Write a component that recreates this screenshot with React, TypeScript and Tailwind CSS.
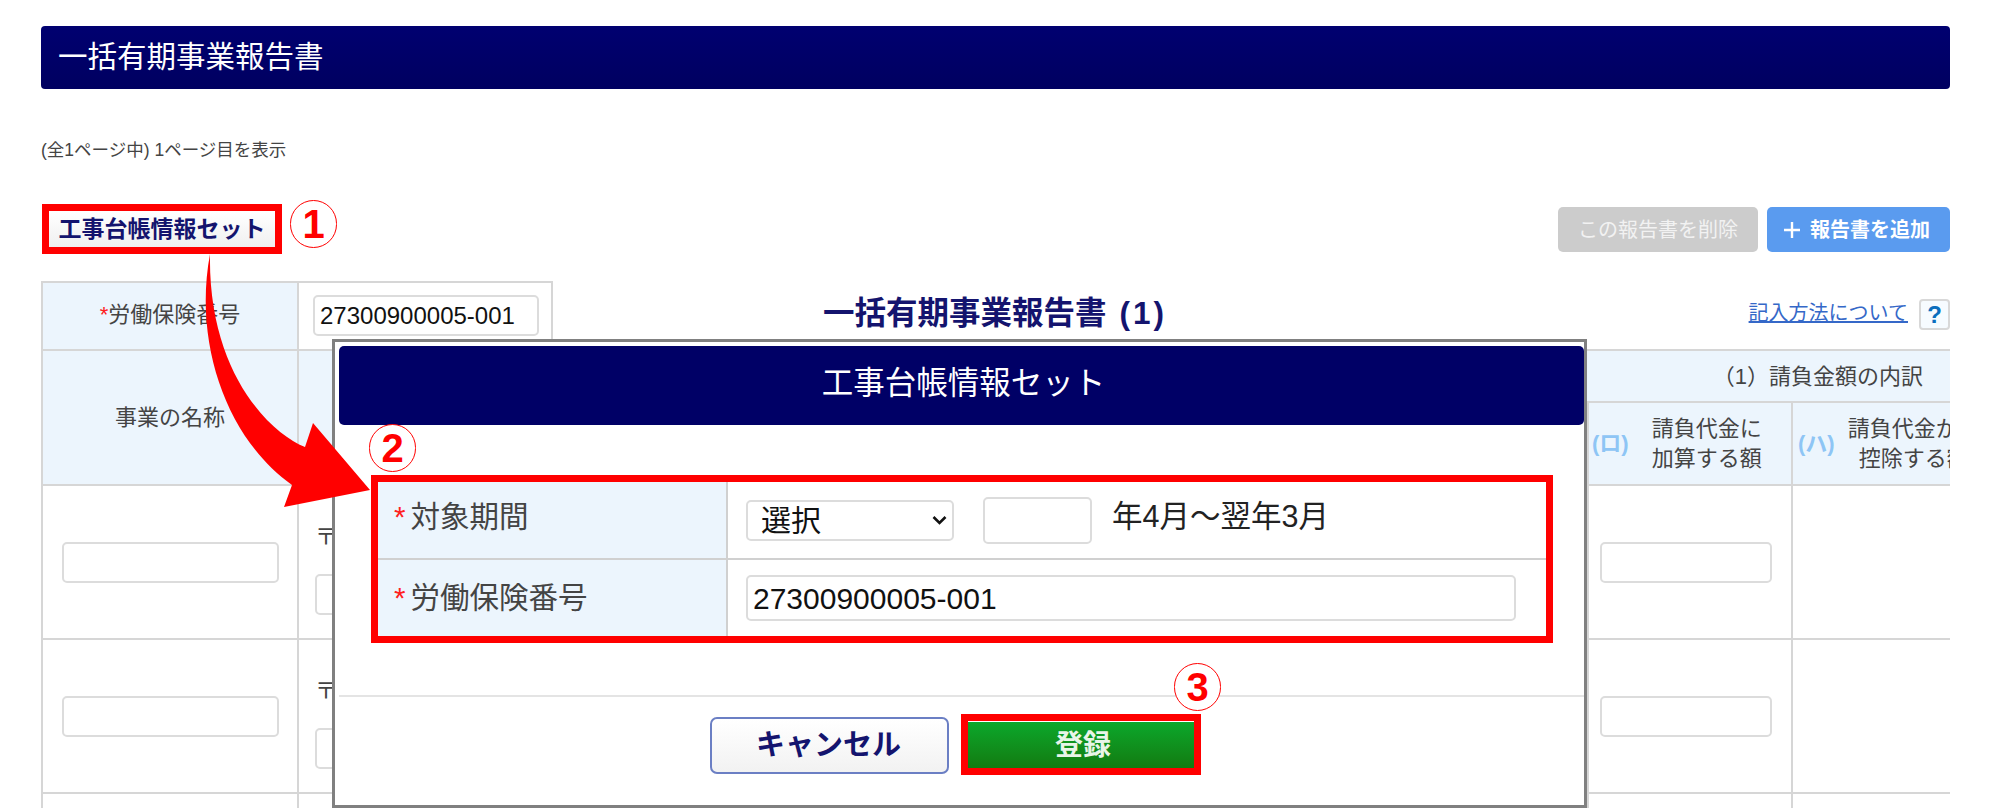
const inputCls = "block rounded-[5px] border-2 border-[#dcdcdc] bg-white";

function CircleNum({ n, className }: { n: string; className: string }) {
  return (
    <span
      className={`absolute flex h-[48px] w-[47px] items-center justify-center rounded-full border-[1.5px] border-[#ff0000] bg-white text-[40px] leading-none font-bold text-[#ff0000] ${className}`}
    >
      {n}
    </span>
  );
}

function RedBox({ className }: { className: string }) {
  return <div className={`absolute border-[7px] border-[#ff0000] ${className}`} />;
}

function BodyRow() {
  return (
    <>
      <div className="flex h-[154px] items-center justify-center border-b-2 border-l-2 border-[#d6d6d6]">
        <div className={`${inputCls} h-[41px] w-[217px]`} />
      </div>
      <div className="flex h-[154px] flex-col gap-[23px] border-b-2 border-l-2 border-[#d6d6d6] pt-[37px] pl-[16px] text-[22px] leading-[28px] text-[#444]">
        <span>〒</span>
        <div className={`${inputCls} h-[41px] w-[217px]`} />
      </div>
      <div className="h-[154px] border-b-2 border-l-2 border-[#d6d6d6]" />
      <div className="flex h-[154px] items-center border-b-2 border-l-2 border-[#d6d6d6] pl-[11px]">
        <div className={`${inputCls} h-[41px] w-[172px]`} />
      </div>
      <div className="h-[154px] border-b-2 border-l-2 border-[#d6d6d6]" />
    </>
  );
}

export default function App() {
  return (
    <div className="relative h-[808px] w-[1995px] overflow-hidden bg-white font-['Liberation_Sans','Noto_Sans_CJK_JP',sans-serif] text-[#444]">
      <div className="pt-[26px] pr-[45px] pl-[41px]">
        {/* page header */}
        <div className="flex h-[63px] items-center rounded-[4px] bg-gradient-to-b from-[#000070] to-[#000060] pl-[17px] text-[29.5px] text-white">
          一括有期事業報告書
        </div>
        <p className="mt-[50px] h-[22px] text-[17.5px] leading-[22px] text-[#444]">(全1ページ中) 1ページ目を表示</p>

        {/* toolbar */}
        <div className="mt-[46px] flex h-[45px] items-center justify-between">
          <button className="ml-[8px] flex h-[36px] w-[226px] items-center justify-center bg-gradient-to-b from-white to-[#efefef] text-[23px] font-bold text-[#14146e]">
            工事台帳情報セット
          </button>
          <div className="flex gap-[9px]">
            <button className="flex h-[45px] w-[200px] items-center justify-center rounded-[5px] bg-[#cccccc] text-[20px] text-[#f2f2f2]">
              この報告書を削除
            </button>
            <button className="flex h-[45px] w-[183px] items-center justify-center gap-[10px] rounded-[5px] bg-[#5a9bef] pr-[3px] text-[20px] font-bold text-white">
              <svg width="16" height="16" viewBox="0 0 16 16" className="shrink-0">
                <path d="M8 0v16M0 8h16" stroke="white" strokeWidth="2.4" />
              </svg>
              報告書を追加
            </button>
          </div>
        </div>

        {/* number row + section title */}
        <div className="mt-[29px] flex h-[68px] items-stretch">
          <div className="flex w-[256px] items-center justify-center border-t-2 border-l-2 border-[#d6d6d6] bg-[#ecf5fd] pb-[4px] text-[22px]">
            <span className="text-[#ff2020]">*</span>労働保険番号
          </div>
          <div className="flex w-[256px] items-center border-t-2 border-r-2 border-l-2 border-[#d6d6d6] pb-[1px] pl-[14px]">
            <div className={`${inputCls} flex h-[41px] w-[226px] items-center pl-[5px] text-[24px] text-[#111]`}>27300900005-001</div>
          </div>
          <div className="flex w-[884px] items-center justify-center gap-[13px] pb-[2px] text-[31.5px] font-bold text-[#14146e]">
            <span>一括有期事業報告書</span>
            <span className="tracking-[3px]">(1)</span>
          </div>
          <div className="flex flex-1 items-start justify-end gap-[11px] pt-[18px]">
            <a className="text-[20px] leading-[28px] text-[#3568c8] underline">記入方法について</a>
            <span className="flex h-[31px] w-[31px] items-center justify-center rounded-[4px] border-2 border-[#d8d8d8] bg-[#f6fbff] text-[24px] font-bold text-[#0a6ebd]">
              ?
            </span>
          </div>
        </div>

        {/* main table */}
        <div className="grid grid-cols-[256px_1050px_240px_204px_159px] overflow-hidden">
          <div className="row-span-2 flex h-[137px] items-center justify-center border-y-2 border-l-2 border-[#d6d6d6] bg-[#ecf5fd] text-[22px]">
            事業の名称
          </div>
          <div className="row-span-2 h-[137px] border-y-2 border-l-2 border-[#d6d6d6] bg-[#ecf5fd]" />
          <div className="col-span-3 flex h-[54px] items-center justify-end border-t-2 border-b-2 border-l-2 border-[#d6d6d6] bg-[#ecf5fd] pr-[27px] text-[22px]">
            （1）請負金額の内訳
          </div>
          <div className="h-[83px] border-b-2 border-l-2 border-[#d6d6d6] bg-[#ecf5fd]" />
          <div className="flex h-[83px] items-center gap-[23px] border-b-2 border-l-2 border-[#d6d6d6] bg-[#ecf5fd] pl-[3px] text-[22px] leading-[30px]">
            <span className="font-bold text-[#8ec5f5]">(ロ)</span>
            <span className="text-center">
              請負代金に
              <br />
              加算する額
            </span>
          </div>
          <div className="h-[83px] overflow-hidden border-b-2 border-l-2 border-[#d6d6d6] bg-[#ecf5fd] pl-[5px] text-[22px] leading-[30px]">
            <div className="flex h-full w-max items-center gap-[13px]">
              <span className="font-bold text-[#8ec5f5]">(ハ)</span>
              <span className="text-center">
                請負代金から
                <br />
                控除する額
              </span>
            </div>
          </div>
          <BodyRow />
          <BodyRow />
          <div className="h-[14px] border-l-2 border-[#d6d6d6]" />
          <div className="h-[14px] border-l-2 border-[#d6d6d6]" />
          <div className="h-[14px] border-l-2 border-[#d6d6d6]" />
          <div className="h-[14px] border-l-2 border-[#d6d6d6]" />
          <div className="h-[14px] border-l-2 border-[#d6d6d6]" />
        </div>
      </div>

      {/* modal */}
      <div className="absolute top-[339px] left-[332px] h-[469px] w-[1255px] border-[3px] border-[#808080] bg-white pt-[4px] pl-[4px]">
        <div className="flex h-[79px] items-center justify-center rounded-[5px] bg-[#000066] pb-[3px] pl-[4px] text-[31.5px] text-white">
          工事台帳情報セット
        </div>
        <div className="mt-[57px] ml-[39px] w-[1168px]">
          <div className="flex h-[78px] border-b-2 border-[#d0d0d0]">
            <div className="flex w-[350px] items-center border-r-2 border-[#d0d0d0] bg-[#ecf5fd] pb-[6px] pl-[16px] text-[29.5px] text-[#444]">
              <span className="mr-[5px] text-[#ff2020]">*</span>対象期間
            </div>
            <div className="flex items-center pl-[18px]">
              <div className={`${inputCls} flex h-[41px] w-[208px] items-center justify-between pr-[5px] pl-[13px] text-[30px] text-[#111]`}>
                選択
                <svg width="15" height="10" viewBox="0 0 15 10">
                  <path d="M1.5 2l6 6 6-6" fill="none" stroke="#111" strokeWidth="2.6" />
                </svg>
              </div>
              <div className={`${inputCls} ml-[29px] h-[47px] w-[109px]`} />
              <span className="ml-[20px] pb-[6px] text-[30.5px] text-[#222]">年4月～翌年3月</span>
            </div>
          </div>
          <div className="flex h-[76px]">
            <div className="flex w-[350px] items-center border-r-2 border-[#d0d0d0] bg-[#ecf5fd] pl-[16px] text-[29.5px] text-[#444]">
              <span className="mr-[5px] text-[#ff2020]">*</span>労働保険番号
            </div>
            <div className="flex items-center pl-[18px]">
              <div className={`${inputCls} flex h-[46px] w-[770px] items-center pl-[5px] text-[30px] text-[#111]`}>27300900005-001</div>
            </div>
          </div>
        </div>
        <div className="mt-[59px] h-[2px] bg-[#e4e4e4]" />
        <div className="mt-[20px] ml-[371px] flex items-center gap-[19px]">
          <button className="flex h-[57px] w-[239px] items-center justify-center rounded-[7px] border-2 border-[#6b7fc4] bg-gradient-to-b from-white to-[#f2f2f2] pr-[2px] text-[29px] font-bold text-[#14146e]">
            キャンセル
          </button>
          <button className="flex h-[47px] w-[226px] items-center justify-center bg-gradient-to-b from-[#0aa82b] to-[#127a10] pl-[4px] text-[28px] font-bold text-[#e8f5e8]">
            登録
          </button>
        </div>
      </div>

      {/* annotations */}
      <RedBox className="top-[204px] left-[42px] h-[50px] w-[240px]" />
      <RedBox className="top-[475px] left-[371px] h-[168px] w-[1182px]" />
      <RedBox className="top-[714px] left-[961px] h-[61px] w-[240px]" />
      <CircleNum n="1" className="top-[200px] left-[290px]" />
      <CircleNum n="2" className="top-[424px] left-[369px]" />
      <CircleNum n="3" className="top-[663px] left-[1174px]" />
      <svg className="absolute top-0 left-0" width="400" height="520" viewBox="0 0 400 520">
        <path d="M210 254C193 345 228 440 292 485L284 507L370 490L313 423L305 447C268 432 208 370 210 254Z" fill="#ff0000" />
      </svg>
    </div>
  );
}
